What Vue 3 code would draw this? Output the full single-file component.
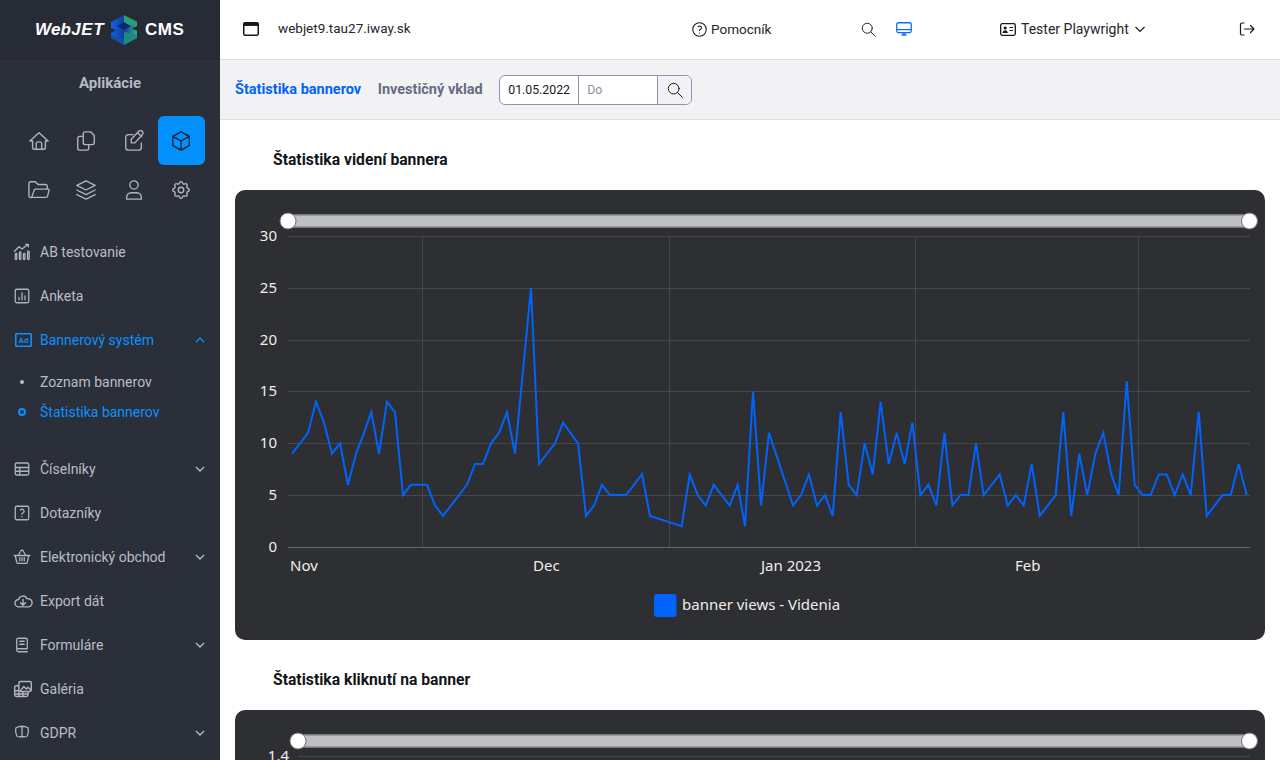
<script setup>
const p = (x, v) => `${x},${(547 - v * 10.37).toFixed(1)}`
const series = [[292,9],[300,10],[308,11],[316,14],[324,12],[332,9],[340,10],[348,6],[356,9],[364,11],[371.3,13],[379,9],[387,14],[395,13],[403,5],[411,6],[427,6],[435,4],[443,3],[467,6],[475,8],[483,8],[491,10],[499,11],[507,13],[515,9],[531,25],[539,8],[555,10],[563,12],[578,10],[586,3],[594,4],[602,6],[610,5],[626,5],[642,7],[650,3],[681.7,2],[689.7,7],[697.7,5],[705.7,4],[713.7,6],[729.7,4],[737.7,6],[745,2],[753,15],[761,4],[769,11],[793,4],[801,5],[809,7],[817,4],[825,5],[832.7,3],[840.7,13],[848.7,6],[856.7,5],[864.7,10],[872.7,7],[880.7,14],[888.7,8],[896.7,11],[904.7,8],[912.4,12],[920.4,5],[928.4,6],[936.4,4],[944.4,11],[952.4,4],[960.4,5],[968.4,5],[976,10],[983.7,5],[999.7,7],[1007.7,4],[1015.7,5],[1023.7,4],[1031.7,8],[1039.7,3],[1055.7,5],[1063.3,13],[1071.3,3],[1079.3,9],[1087.3,5],[1095.3,9],[1103.3,11],[1111.3,7],[1118.7,5],[1126.7,16],[1134.7,6],[1142.7,5],[1150.7,5],[1158.7,7],[1166.7,7],[1174.7,5],[1182.7,7],[1190.7,5],[1198.7,13],[1206.7,3],[1222.7,5],[1230.7,5],[1238.7,8],[1246.7,5]]
const line = series.map(([x, v]) => p(x, v)).join(' ')
const yTicks = [[30,236],[25,288],[20,340],[15,391],[10,443],[5,495],[0,547]]
const vLines = [422,669,915,1138]
const xLabels = [['Nov',290],['Dec',533],['Jan 2023',761],['Feb',1015]]

const gear = 'M10.325 4.317c.426-1.756 2.924-1.756 3.35 0a1.724 1.724 0 0 0 2.573 1.066c1.543-.94 3.31.826 2.37 2.37a1.724 1.724 0 0 0 1.065 2.572c1.756.426 1.756 2.924 0 3.35a1.724 1.724 0 0 0-1.066 2.573c.94 1.543-.826 3.31-2.37 2.37a1.724 1.724 0 0 0-2.572 1.065c-.426 1.756-2.924 1.756-3.35 0a1.724 1.724 0 0 0-2.573-1.066c-1.543.94-3.31-.826-2.37-2.37a1.724 1.724 0 0 0-1.065-2.572c-1.756-.426-1.756-2.924 0-3.35a1.724 1.724 0 0 0 1.066-2.573c-.94-1.543.826-3.31 2.37-2.37c1 .608 2.296.07 2.572-1.065zM9 12a3 3 0 1 0 6 0a3 3 0 0 0-6 0'
const topIcons = [
  { d: 'M5 12H2l10-9 10 9h-3M5 12v7a2 2 0 0 0 2 2h10a2 2 0 0 0 2-2v-7M9 21v-6a2 2 0 0 1 2-2h2a2 2 0 0 1 2 2v6' },
  { d: 'M11 2h6l4 4v8a2 2 0 0 1-2 2h-8a2 2 0 0 1-2-2V4a2 2 0 0 1 2-2zM9 7H5a2 2 0 0 0-2 2v11a2 2 0 0 0 2 2h8a2 2 0 0 0 2-2v-4' },
  { d: 'M11 5H6a3 3 0 0 0-3 3v11a3 3 0 0 0 3 3h11a3 3 0 0 0 3-3v-5M20.900 5.100a2.600 2.600 0 0 0-3.700-3.700L9 10v4h4zM16 3l4.500 4.500' },
  { d: 'M12 2l9 5v10l-9 5-9-5V7l9-5M12 12l9-5M12 12v10M12 12L3 7', active: true },
  { d: 'M4 20L7 11.600A1 1 0 0 1 8 11h14a1 1 0 0 1 1 1.200l-1.600 6.200A2 2 0 0 1 19.400 20H4zM4 20a2 2 0 0 1-3-1.500V5a2 2 0 0 1 2-2h5l3 3h8a2 2 0 0 1 2 2v3' },
  { d: 'M12 2L2 7l10 5 10-5-10-5M2 12l10 5 10-5M2 17l10 5 10-5' },
  { d: 'M7.500 6.500a4.500 4.500 0 1 0 9 0a4.500 4.500 0 0 0-9 0M4 22v-2a5 5 0 0 1 5-5h6a5 5 0 0 1 5 5v2z' },
  { d: gear }
]
const menu = [
  { label: 'AB testovanie', d: 'M2 11l6-6 4 3 8-6M17 2h3.500v3M3 15a1 1 0 0 1 2 0v6a1 1 0 0 1-2 0zM8.500 13a1 1 0 0 1 2 0v8a1 1 0 0 1-2 0zM14 15a1 1 0 0 1 2 0v6a1 1 0 0 1-2 0zM19.500 12a1 1 0 0 1 2 0v9a1 1 0 0 1-2 0z' },
  { label: 'Anketa', d: 'M5 3h14a2 2 0 0 1 2 2v14a2 2 0 0 1-2 2H5a2 2 0 0 1-2-2V5a2 2 0 0 1 2-2zM8 17v-3M12 17V8M16 17v-5' },
  { label: 'Bannerový systém', ad: true, open: true, active: true },
  { sub: 'Zoznam bannerov' },
  { sub: 'Štatistika bannerov', current: true },
  { label: 'Číselníky', d: 'M5 4h14a2 2 0 0 1 2 2v12a2 2 0 0 1-2 2H5a2 2 0 0 1-2-2V6a2 2 0 0 1 2-2zM3 10h18M3 15h18M9 10v10', chevron: true, gap: true },
  { label: 'Dotazníky', d: 'M5 3h14a2 2 0 0 1 2 2v14a2 2 0 0 1-2 2H5a2 2 0 0 1-2-2V5a2 2 0 0 1 2-2zM12 17v.01M12 13.500a1.500 1.500 0 0 1 1-1.500 2.600 2.600 0 1 0-3-4' },
  { label: 'Elektronický obchod', d: 'M7 10l4-7h2l4 7M21 10l-2 9a2 2 0 0 1-2 1.500H7a2 2 0 0 1-2-1.500l-2-9zM1.500 10h21M9 13v4M12 13v4M15 13v4', chevron: true },
  { label: 'Export dát', wide: true, d: 'M7 19a4.600 4.400 0 0 1-.1-8.800 5 4.600 0 0 1 9.700-1 3.500 3.500 0 0 1 1.400 0A4.800 4.800 0 0 1 18 19zM12 10v7M9 14l3 3 3-3' },
  { label: 'Formuláre', d: 'M5 19V5a2 2 0 0 1 2-2h10a2 2 0 0 1 2 2v12H6.500A2 2 0 0 0 5 19a2 2 0 0 0 2 2h12M9 7h6M9 11h6', chevron: true },
  { label: 'Galéria', wide: true, d: 'M9 3h11a2 2 0 0 1 2 2v8a2 2 0 0 1-2 2H9a2 2 0 0 1-2-2V5a2 2 0 0 1 2-2zM9 14l4-5 3 3 2-2 3 3M7 8H4a2 2 0 0 0-2 2v9a2 2 0 0 0 2 2h12a2 2 0 0 0 2-2v-3M2 14h5M2 18h16M7 16v5M12 16v5' },
  { label: 'GDPR', d: 'M12 3c3 0 6 1 8 2 1 4 0 9-2 12M12 3C9 3 6 4 4 5c-1 4 0 9 2 12M12 3v14M8 17h8', chevron: true }
]
</script>

<template>
  <div class="page">
    <aside class="sidebar">
      <div class="logo">
        <span class="logo-web">Web<i>JET</i></span>
        <svg class="cube" viewBox="0 0 26 30" width="26" height="30">
          <defs>
            <linearGradient id="cg" x1="0" x2="1" y1="0" y2="0">
              <stop offset="0" stop-color="#0d62ea" />
              <stop offset="0.5" stop-color="#123f9c" />
              <stop offset="1" stop-color="#2fae86" />
            </linearGradient>
          </defs>
          <polygon points="13,0 26,7 26,23 13,30 0,23 0,7" fill="url(#cg)" />
          <polygon points="13,7 20,11 13,15 6,11" fill="#0d2a70" />
          <polygon points="0,13 5,15.500 0,18" fill="#272b35" />
          <polygon points="26,11 21,13.500 26,16" fill="#272b35" />
          <polygon points="13,0 26,7 20,11 13,7" fill="#27a078" />
          <polygon points="13,17 26,20 26,23 13,30" fill="#1f8a7c" />
          <polygon points="0,20 13,24 13,30 0,23" fill="#14509c" />
        </svg>
        <span class="logo-cms">CMS</span>
      </div>
      <div class="apps-title">Aplikácie</div>
      <div class="apps">
        <div v-for="(ic, i) in topIcons" :key="i" class="app" :class="{ on: ic.active }">
          <svg viewBox="0 0 24 24" width="22" height="22" class="ico"><path :d="ic.d" /></svg>
        </div>
      </div>
      <nav class="menu">
        <template v-for="m in menu" :key="m.label || m.sub">
          <div v-if="m.sub" class="sub" :class="{ current: m.current }">
            <span class="dot"></span>{{ m.sub }}
          </div>
          <div v-else class="item" :class="{ active: m.active, gap: m.gap }">
            <span class="mi">
              <svg v-if="m.ad" class="ico thin adi" viewBox="0 0 17 14" width="17" height="14">
                <rect x="0.700" y="0.700" width="15.600" height="12.600" rx="1.500" />
                <text x="8.500" y="10.200" text-anchor="middle" class="adt">Ad</text>
              </svg>
              <svg v-else viewBox="0 0 24 24" :width="m.wide ? 20 : 18" :height="m.wide ? 20 : 18" class="ico thin"><path :d="m.d" /></svg>
            </span>
            <span class="ml">{{ m.label }}</span>
            <svg v-if="m.chevron || m.open" class="chev" viewBox="0 0 12 12" width="12" height="12">
              <path :d="m.open ? 'M2 8l4-4 4 4' : 'M2 4l4 4 4-4'" />
            </svg>
          </div>
        </template>
      </nav>
    </aside>

    <main class="main">
      <header class="top">
        <svg class="t-window" viewBox="0 0 16 14" width="16" height="14"><rect x="0.750" y="0.750" width="14.500" height="12.500" rx="1.500" fill="none" stroke="#16181d" stroke-width="1.500" /><rect x="0.750" y="0.750" width="14.500" height="3.200" fill="#16181d" /></svg>
        <span class="t-domain">webjet9.tau27.iway.sk</span>
        <span class="t-help">
          <svg viewBox="0 0 24 24" width="17" height="17" class="tico"><circle cx="12" cy="12" r="9.500" /><path d="M12 17v.01M12 13.500a1.500 1.500 0 0 1 1-1.500 2.600 2.600 0 1 0-3-4" /></svg>
          Pomocník
        </span>
        <svg class="t-search tico" viewBox="0 0 24 24" width="15" height="15"><circle cx="10" cy="10" r="8" /><path d="M23 23l-7-7" /></svg>
        <svg class="t-screen" viewBox="0 0 16 14" width="16" height="14"><rect x="0.750" y="0.750" width="14.500" height="9.800" rx="1.500" fill="none" stroke="#0a6cff" stroke-width="1.300" /><path d="M1 7.600h14M5.500 13.200h5M7 10.600v2.500M9 10.600v2.500" fill="none" stroke="#0a6cff" stroke-width="1.300" /></svg>
        <span class="t-user">
          <svg viewBox="0 0 16 13" width="16" height="13"><rect x="0.700" y="0.700" width="14.600" height="11.600" rx="1.500" fill="none" stroke="#16181d" stroke-width="1.300" /><circle cx="5.200" cy="5" r="1.600" fill="#16181d" /><path d="M2.600 10c.2-2 1.300-2.800 2.600-2.800S7.600 8 7.800 10z" fill="#16181d" /><path d="M9.500 4.500h3.500M9.500 7.500h3.500" stroke="#16181d" stroke-width="1.200" /></svg>
          <span class="t-name">Tester Playwright</span>
          <svg class="t-chev" viewBox="0 0 12 12" width="12" height="12"><path d="M1.500 4l4.500 4.500L10.500 4" fill="none" stroke="#16181d" stroke-width="1.200" /></svg>
        </span>
        <svg class="t-logout tico" viewBox="0 0 16 14" width="16" height="14"><path d="M5 1H3a1.500 1.500 0 0 0-1.500 1.500v9A1.500 1.500 0 0 0 3 13h2M5.500 7H15M11.500 3.500L15 7l-3.500 3.500" /></svg>
      </header>

      <div class="bar">
        <span class="tab on">Štatistika bannerov</span>
        <span class="tab">Investičný vklad</span>
        <div class="dates">
          <span class="d d1">01.05.2022</span>
          <span class="d d2">Do</span>
          <span class="d d3">
            <svg viewBox="0 0 24 24" width="16" height="16" class="tico"><circle cx="10" cy="10" r="8" /><path d="M23 23l-7-7" /></svg>
          </span>
        </div>
      </div>

      <div class="content">
        <section class="section">
          <h2>Štatistika videní bannera</h2>
          <div class="card">
            <svg viewBox="235 190 1030 450" width="1030" height="450">
              <line v-for="t in yTicks" :key="t[0]" x1="288" x2="1250" :y1="t[1] + .5" :y2="t[1] + .5" class="grid" :class="{ base: t[0] === 0 }" />
              <line v-for="x in vLines" :key="x" :x1="x + .5" :x2="x + .5" y1="236" y2="547" class="grid" />
              <rect x="288" y="214.750" width="961" height="12.500" class="track" />
              <circle cx="288" cy="221" r="8" class="handle" />
              <circle cx="1249.500" cy="221" r="8" class="handle" />
              <text v-for="t in yTicks" :key="t[0]" x="277" :y="t[1] + 5" text-anchor="end" class="lbl">{{ t[0] }}</text>
              <text v-for="l in xLabels" :key="l[0]" :x="l[1]" y="571" class="lbl">{{ l[0] }}</text>
              <polyline :points="line" class="series" />
              <rect x="654" y="594" width="22.500" height="23" rx="3" fill="#0063fb" />
              <text x="682" y="610" class="lbl">banner views - Videnia</text>
            </svg>
          </div>
        </section>
        <section class="section">
          <h2>Štatistika kliknutí na banner</h2>
          <div class="card">
            <svg viewBox="235 710 1030 450" width="1030" height="450">
              <line x1="298" x2="1250" y1="756.500" y2="756.500" class="grid" />
              <rect x="298" y="734.750" width="951" height="12.500" class="track" />
              <circle cx="298" cy="741" r="8" class="handle" />
              <circle cx="1249.500" cy="741" r="8" class="handle" />
              <text x="289" y="761" text-anchor="end" class="lbl">1.4</text>
            </svg>
          </div>
        </section>
      </div>
    </main>
  </div>
</template>

<style scoped>
.page {
  display: flex;
  width: 1280px;
  height: 760px;
  overflow: hidden;
  background: #fff;
  font-family: Roboto, "Liberation Sans", sans-serif;
  font-size: 14px;
}
.sidebar { width: 220px; flex: none; background: #2b2f3a; color: #b9bdc8; display: flex; flex-direction: column; }
.logo { height: 60px; flex: none; background: #272b35; border-bottom: 1px solid #252831; box-sizing: border-box; display: flex; align-items: center; color: #fff; font-family: "Liberation Sans", sans-serif; font-weight: 700; padding-left: 35px; }
.logo-web { font-size: 17px; font-style: italic; width: 76px; letter-spacing: .2px; }
.logo-web i { letter-spacing: .6px; }
.cube { flex: none; }
.logo-cms { font-size: 17px; margin-left: 8px; letter-spacing: .5px; }
.apps-title { height: 56px; flex: none; text-align: center; font-weight: 700; font-size: 15px; line-height: 46px; color: #b5bac6; }
.apps { display: grid; grid-template-columns: repeat(4, 47.5px); grid-auto-rows: 49px; padding: 0 15px; flex: none; margin-bottom: 16px; }
.app { display: flex; align-items: center; justify-content: center; border-radius: 6px; }
.app.on { background: #0091ff; }
.ico { fill: none; stroke: #b0b4c0; stroke-width: 1.500; stroke-linecap: round; stroke-linejoin: round; }
.app.on .ico { stroke: #16202c; }
.ico.thin { stroke-width: 1.700; }
.menu { display: flex; flex-direction: column; }
.item { height: 44px; flex: none; display: flex; align-items: center; position: relative; padding-left: 15px; }
.item.gap { margin-top: 20px; }
.mi { width: 25px; flex: none; display: flex; align-items: center; }
.mi svg { margin-left: -2px; }
.mi .adi { margin-left: 0; }
.item.active { color: #0a92ff; margin-bottom: 5px; }
.item.active .ico { stroke: #0a92ff; }
.adt { font: 700 7.500px "Liberation Sans", sans-serif; fill: #0a92ff; stroke: none; }
.chev { position: absolute; left: 194px; top: 16px; fill: none; stroke: currentColor; stroke-width: 1.300; }
.sub { height: 30px; flex: none; display: flex; align-items: center; padding-left: 40px; position: relative; }
.dot { position: absolute; left: 20px; top: 13px; width: 4px; height: 4px; border-radius: 50%; background: #b9bdc8; }
.sub.current { color: #0a92ff; }
.sub.current .dot { left: 18px; top: 11px; width: 4px; height: 4px; background: transparent; border: 2px solid #0a92ff; }
.main { flex: 1; min-width: 0; display: flex; flex-direction: column; }
.top { height: 60px; flex: none; box-sizing: border-box; border-bottom: 1px solid #dcdde1; padding-bottom: 1px; display: flex; align-items: center; color: #23262d; }
.t-window { margin-left: 23px; flex: none; }
.t-domain { margin-left: 19px; width: 413px; flex: none; margin-top: -2px; font-size: 13.500px; }
.t-help { display: flex; align-items: center; gap: 3px; width: 170px; flex: none; font-size: 13.500px; }
.t-search { flex: none; margin-right: 20px; }
.t-screen { flex: none; margin-right: 88px; }
.t-user { display: flex; align-items: center; gap: 5px; flex: none; width: 239px; }
.t-chev { flex: none; }
.t-logout { flex: none; }
.tico { fill: none; stroke: #16181d; stroke-width: 1.500; stroke-linecap: round; stroke-linejoin: round; }
.t-logout.tico { stroke-width: 1.200; }
.bar { height: 60px; flex: none; box-sizing: border-box; background: #f2f2f5; border-bottom: 1px solid #dcdde1; display: flex; align-items: center; padding-left: 15px; }
.tab { font-weight: 700; font-size: 14.500px; color: #666c80; margin-right: 16.500px; }
.tab.on { color: #0063fb; }
.dates { display: flex; height: 30px; box-sizing: border-box; border: 1px solid #8a93b3; border-radius: 6px; background: #fff; overflow: hidden; font-size: 12.300px; }
.d { display: flex; align-items: center; box-sizing: border-box; border-right: 1px solid #8a93b3; padding-left: 8px; }
.d1 { width: 79px; color: #16181d; }
.d2 { width: 79px; color: #8a8f9c; }
.d3 { width: 33px; border-right: 0; background: #f2f2f5; padding-left: 9px; }
.content { flex: 1; min-height: 0; overflow: hidden; padding: 25px 15px 0; }
.section { margin-bottom: 25px; }
h2 { margin: 0 0 15px; height: 30px; line-height: 30px; padding-left: 38px; font-size: 15.700px; font-weight: 700; color: #13151a; }
.card { height: 450px; background: #2e2f33; border-radius: 10px; overflow: hidden; }
.card svg { display: block; }
.grid { stroke: #47484d; stroke-width: 1; }
.grid.base { stroke: #66676b; }
.track { fill: #bfc0c2; stroke: #76777a; stroke-width: 1.500; }
.handle { fill: #fff; stroke: #76777a; stroke-width: 1; }
.lbl { fill: #eeeeee; font-size: 15px; font-family: "Noto Sans", sans-serif; }
.series { fill: none; stroke: #0063fb; stroke-width: 2; stroke-linejoin: miter; }
</style>

<style>
html, body { margin: 0; overflow: hidden; }
</style>
